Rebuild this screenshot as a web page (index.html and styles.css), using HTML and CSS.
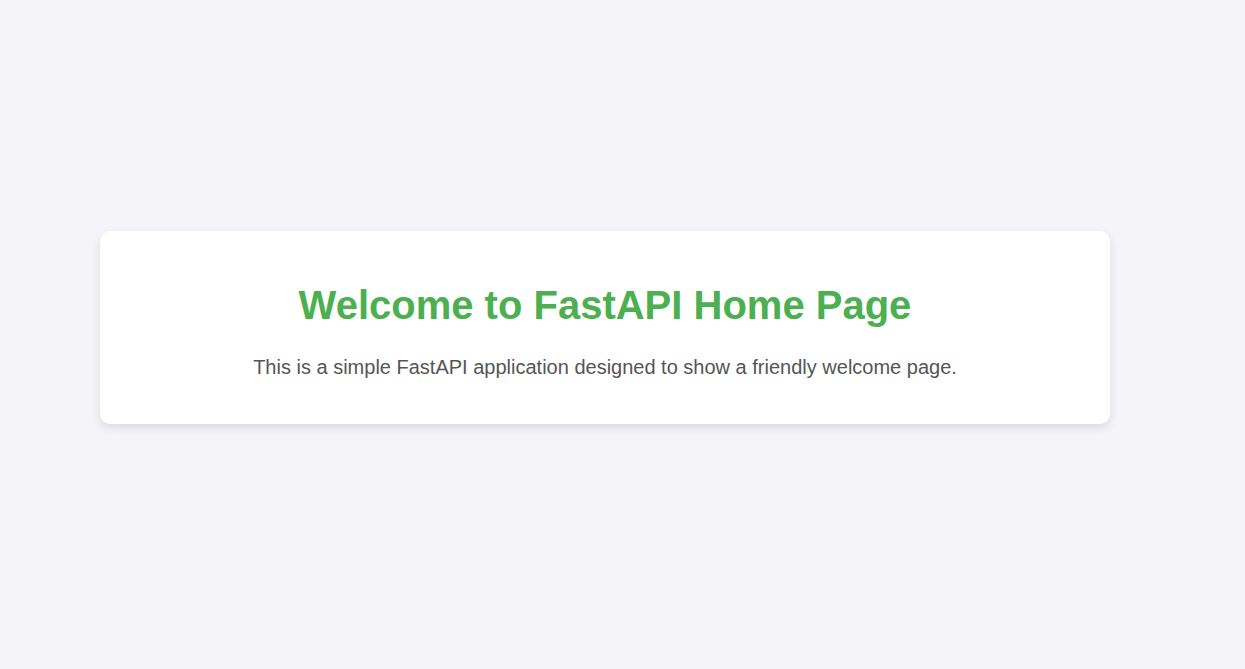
FILE: index.html
```html
<!DOCTYPE html>
<html lang="en">
<head>
<meta charset="UTF-8">
<title>FastAPI Home</title>
<link rel="stylesheet" href="styles.css">
</head>
<body>
<div class="container">
  <h1 class="title">Welcome to FastAPI Home Page</h1>
  <p class="lead">This is a simple FastAPI application designed to show a friendly welcome page.</p>
</div>
</body>
</html>
```
FILE: styles.css
```css
html, body {
  margin: 0;
  padding: 0;
}
body {
  font-family: "Liberation Sans", Arial, sans-serif;
  background: #f4f4f9;
  height: 100vh;
  box-sizing: border-box;
  padding: 0 0 14px 100px;
  display: flex;
  align-items: center;
}
.container {
  width: 1010px;
  box-sizing: border-box;
  padding: 25px 20px;
  background: #ffffff;
  border-radius: 10px;
  box-shadow: 0 4px 10px rgba(0, 0, 0, 0.1);
  text-align: center;
}
.title {
  font-size: 40px;
  font-weight: bold;
  color: #4caf50;
  margin: 26.8px 0 27.8px;
}
.lead {
  font-size: 20px;
  color: #555555;
  margin: 20px 0;
}
```
